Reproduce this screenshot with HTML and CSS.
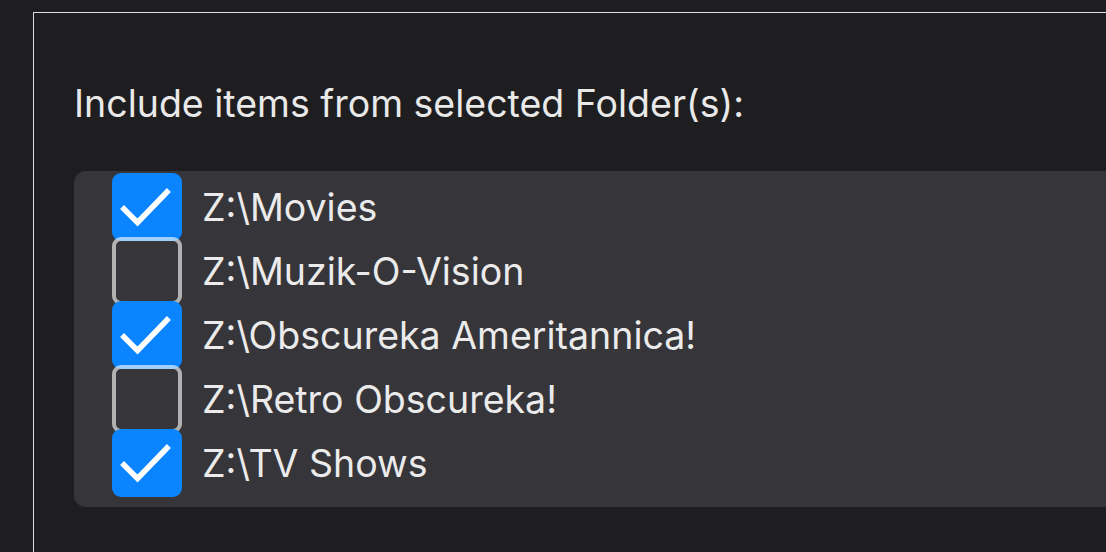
FILE: index.html
```html
<!DOCTYPE html>
<html lang="en">
<head>
<meta charset="utf-8">
<title>Folders</title>
<link rel="stylesheet" href="styles.css">
</head>
<body>
<div class="page">
  <section class="panel">
    <h2 class="heading">Include items from selected Folder(s):</h2>
    <ul class="folder-list">
      <li class="folder-row">
        <span class="check checked"><svg viewBox="0 0 70 68" width="70" height="68"><path d="M12 36 L25.5 49.5 L55 19" fill="none" stroke="#fff" stroke-width="5.5" stroke-linecap="square"/></svg></span>
        <span class="folder-name">Z:\Movies</span>
      </li>
      <li class="folder-row">
        <span class="check"></span>
        <span class="folder-name">Z:\Muzik-O-Vision</span>
      </li>
      <li class="folder-row">
        <span class="check checked"><svg viewBox="0 0 70 68" width="70" height="68"><path d="M12 36 L25.5 49.5 L55 19" fill="none" stroke="#fff" stroke-width="5.5" stroke-linecap="square"/></svg></span>
        <span class="folder-name">Z:\Obscureka Ameritannica!</span>
      </li>
      <li class="folder-row">
        <span class="check"></span>
        <span class="folder-name">Z:\Retro Obscureka!</span>
      </li>
      <li class="folder-row">
        <span class="check checked"><svg viewBox="0 0 70 68" width="70" height="68"><path d="M12 36 L25.5 49.5 L55 19" fill="none" stroke="#fff" stroke-width="5.5" stroke-linecap="square"/></svg></span>
        <span class="folder-name">Z:\TV Shows</span>
      </li>
    </ul>
  </section>
</div>
</body>
</html>
```

FILE: styles.css
```css
html, body {
  margin: 0;
  padding: 0;
  background: #1e1e20;
  overflow: hidden;
}

.page {
  padding: 12px 0 0 33px;
  height: 552px;
  box-sizing: border-box;
}

.panel {
  width: 1200px;
  height: 700px;
  border: 1px solid #dcdcdc;
  box-sizing: border-box;
  padding: 68px 0 0 40px;
  font-family: Inter, "Noto Sans", sans-serif;
  color: #e9e9e9;
}

.heading {
  margin: 0;
  font-size: 37.5px;
  font-weight: 400;
  line-height: 45px;
}

.folder-list {
  list-style: none;
  margin: 45px 0 0 0;
  padding: 4px 0 12px 38px;
  background: #363539;
  border-radius: 12px 0 0 12px;
}

.folder-row {
  display: flex;
  align-items: center;
  gap: 20px;
  height: 64px;
}

.check {
  flex: none;
  width: 70px;
  height: 68px;
  box-sizing: border-box;
  border-radius: 9px;
  border: 4px solid rgba(255, 255, 255, 0.62);
  display: block;
}

.check.checked {
  border: none;
  background: #0a84ff;
}

.check svg {
  display: block;
}

.folder-name {
  font-size: 37.5px;
  line-height: 45px;
  color: #ebebeb;
}
```
